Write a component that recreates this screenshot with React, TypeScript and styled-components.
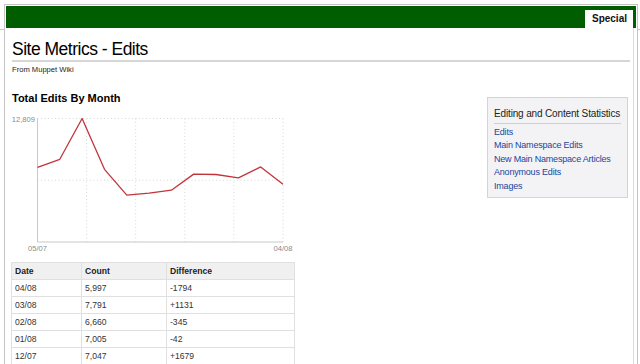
import React from "react";
import styled, { createGlobalStyle } from "styled-components";

const Global = createGlobalStyle`
  html, body { margin: 0; padding: 0; background: #fff; }
  body { font-family: "Liberation Sans", Arial, Helvetica, sans-serif; color: #222; }
  * { box-sizing: border-box; }
`;

const Page = styled.div`
  width: 640px;
  height: 364px;
  overflow: hidden;
  display: flex;
  flex-direction: column;
  background:
    linear-gradient(#c8c8c8, #c8c8c8) 0 29px / 100% 1px no-repeat,
    #fff;
`;

const Frame = styled.div`
  flex: 1;
  margin: 4px 2px 0 4px;
  border: 1px solid #c4c4c4;
  border-bottom: none;
  padding: 1px 1px 0 1px;
  background: #fff;
  display: flex;
  flex-direction: column;
`;

const GreenBar = styled.div`
  height: 22px;
  background: #005e00;
  display: flex;
  justify-content: flex-end;
  align-items: flex-end;
  padding-right: 3px;
`;

const Tab = styled.div`
  height: 18px;
  background: #fff;
  padding: 0 6px 0 7px;
  font-size: 10px;
  font-weight: bold;
  line-height: 18px;
  color: #111;
`;

const Content = styled.div`
  flex: 1;
  margin-right: 2px;
  border-right: 1px solid #dcdcdc;
  padding: 10px 3px 0 6px;
`;

const Title = styled.h1`
  margin: 0;
  font-size: 17.5px;
  font-weight: normal;
  letter-spacing: -0.5px;
  line-height: 22px;
  color: #000;
  border-bottom: 2px solid #d6d6d6;
`;

const Sub = styled.div`
  margin-top: 3px;
  font-size: 7.6px;
  line-height: 10px;
  color: #222;
`;

const Row = styled.div`
  display: flex;
  justify-content: space-between;
  align-items: flex-start;
  margin-top: 16px;
`;

const MainCol = styled.div`
  width: 290px;
  display: flex;
  flex-direction: column;
`;

const SectionHead = styled.h2`
  margin: 0;
  font-size: 11px;
  line-height: 14px;
  font-weight: bold;
  color: #000;
`;

const ChartSvg = styled.svg`
  display: block;
  margin-top: 5px;
`;

const Table = styled.table`
  margin-top: 4px;
  margin-left: -1px;
  width: 283px;
  border-collapse: collapse;
  font-size: 8.6px;
  color: #333;
  table-layout: fixed;
`;

const Th = styled.th<{ $w: number }>`
  width: ${(p) => p.$w}px;
  height: 17px;
  padding: 0 3px;
  text-align: left;
  font-weight: bold;
  background: #f0f0f0;
  border: 1px solid #e0e0e0;
  color: #222;
`;

const Td = styled.td`
  height: 17px;
  padding: 0 3px;
  border: 1px solid #e0e0e0;
`;

const Sidebar = styled.div`
  width: 141px;
  margin-top: 6px;
  margin-right: 2px;
  background: #f3f3f6;
  border: 1px solid #d4d4d8;
  padding: 9px 6px 4px 6px;
`;

const SideHead = styled.div`
  font-size: 10px;
  line-height: 13px;
  letter-spacing: -0.15px;
  color: #222;
  padding-bottom: 3px;
  border-bottom: 1px solid #cfcfcf;
  white-space: nowrap;
`;

const LinkList = styled.ul`
  list-style: none;
  margin: 2px 0 0 0;
  padding: 0;
`;

const LinkItem = styled.li`
  font-size: 9px;
  line-height: 13.4px;
  letter-spacing: -0.2px;
  white-space: nowrap;
`;

const Link = styled.a`
  color: #23449a;
  text-decoration: none;
`;

const values = [7750, 8574, 12809, 7541, 4855, 5062, 5368, 7047, 7005, 6660, 7791, 5997];
const X0 = 37.5;
const X1 = 283;
const YT = 118.5;
const YB = 242;
const MAX = 12809;

const rows = [
  ["04/08", "5,997", "-1794"],
  ["03/08", "7,791", "+1131"],
  ["02/08", "6,660", "-345"],
  ["01/08", "7,005", "-42"],
  ["12/07", "7,047", "+1679"],
];

const links = [
  "Edits",
  "Main Namespace Edits",
  "New Main Namespace Articles",
  "Anonymous Edits",
  "Images",
];

function Chart() {
  const step = (X1 - X0) / (values.length - 1);
  const pts = values
    .map((v, i) => `${(X0 + i * step).toFixed(1)},${(YB - (v / MAX) * (YB - YT)).toFixed(1)}`)
    .join(" ");
  const vgrid = [1, 2, 3, 4, 5].map((k) => X0 + ((X1 - X0) * k) / 5);
  const mid = (YT + YB) / 2;
  return (
    <ChartSvg width={290} height={148} viewBox="12 110 290 148">
      <g stroke="#d8d8d8" strokeWidth={1} strokeDasharray="1 2.5" fill="none">
        {vgrid.map((x) => (
          <line key={x} x1={x} y1={YT} x2={x} y2={YB} />
        ))}
        <line x1={X0} y1={YT} x2={X1} y2={YT} />
        <line x1={X0} y1={mid} x2={X1} y2={mid} />
      </g>
      <g stroke="#c8c8c8" strokeWidth={1}>
        <line x1={X0} y1={YT} x2={X0} y2={YB} />
        <line x1={X0} y1={YB} x2={X1} y2={YB} />
      </g>
      <polyline points={pts} fill="none" stroke="#c2343c" strokeWidth={1.3} strokeLinejoin="round" />
      <g fill="#8a8a8a" fontSize="7.6" fontFamily="Liberation Sans, Arial, sans-serif">
        <text x={35} y={121.7} textAnchor="end">12,809</text>
        <text x={X0} y={250.8} textAnchor="middle">05/07</text>
        <text x={X1} y={250.8} textAnchor="middle">04/08</text>
      </g>
    </ChartSvg>
  );
}

export default function App() {
  return (
    <Page>
      <Global />
      <Frame>
        <GreenBar>
          <Tab>Special</Tab>
        </GreenBar>
        <Content>
          <Title>Site Metrics - Edits</Title>
          <Sub>From Muppet Wiki</Sub>
          <Row>
            <MainCol>
              <SectionHead>Total Edits By Month</SectionHead>
              <Chart />
              <Table>
                <thead>
                  <tr>
                    <Th $w={70}>Date</Th>
                    <Th $w={85}>Count</Th>
                    <Th $w={128}>Difference</Th>
                  </tr>
                </thead>
                <tbody>
                  {rows.map((r) => (
                    <tr key={r[0]}>
                      {r.map((c, i) => (
                        <Td key={i}>{c}</Td>
                      ))}
                    </tr>
                  ))}
                </tbody>
              </Table>
            </MainCol>
            <Sidebar>
              <SideHead>Editing and Content Statistics</SideHead>
              <LinkList>
                {links.map((l) => (
                  <LinkItem key={l}>
                    <Link href="#">{l}</Link>
                  </LinkItem>
                ))}
              </LinkList>
            </Sidebar>
          </Row>
        </Content>
      </Frame>
    </Page>
  );
}
